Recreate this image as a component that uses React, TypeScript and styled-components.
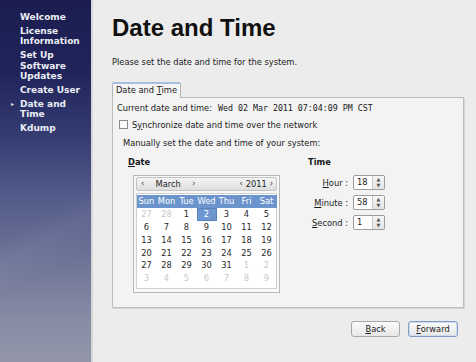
import styled, { createGlobalStyle } from "styled-components";

const GlobalStyle = createGlobalStyle`
  html, body {
    margin: 0;
    padding: 0;
  }
  body {
    width: 476px;
    height: 362px;
    overflow: hidden;
    background: #ececec;
    font-family: "DejaVu Sans", "Liberation Sans", sans-serif;
    color: #1a1a1a;
  }
`;

const Screen = styled.div`
  display: flex;
  width: 476px;
  height: 362px;
`;

const Sidebar = styled.div`
  width: 93px;
  flex-shrink: 0;
  border-right: 2px solid #d6d6d8;
  background:
    linear-gradient(150deg, transparent 58%, rgba(255, 255, 255, 0.04) 64%, transparent 72%),
    linear-gradient(180deg, #1b1d4f 0%, #20245a 20%, #353d72 38%, #535c8a 55%, #6e7497 72%, #878ba4 88%, #9396aa 100%);
  padding: 12px 0 0 20px;
  box-sizing: border-box;
  display: flex;
  flex-direction: column;
  gap: 3.5px;
`;

const NavItem = styled.div<{ current?: boolean }>`
  position: relative;
  font-size: 9px;
  font-weight: bold;
  line-height: 10.4px;
  color: #eceef6;
  white-space: pre-line;
  &::before {
    content: "▸";
    display: ${(p) => (p.current ? "block" : "none")};
    position: absolute;
    left: -9px;
    top: 0;
    font-size: 6px;
    color: #e0e2ec;
  }
`;

const Main = styled.div`
  flex: 1;
  display: flex;
  flex-direction: column;
  padding: 0 12px 0 19px;
`;

const Title = styled.h1`
  margin: 14px 0 0;
  font-family: "Liberation Sans", "DejaVu Sans", sans-serif;
  font-size: 24px;
  line-height: 28px;
  font-weight: bold;
  color: #111;
`;

const Intro = styled.p`
  margin: 15px 0 0;
  font-size: 8.3px;
  line-height: 10px;
  color: #222;
`;

const TabBar = styled.div`
  display: flex;
  margin-top: 15px;
`;

const Tab = styled.div`
  width: 69px;
  height: 16px;
  box-sizing: border-box;
  border: 1px solid #b4b4b4;
  border-top: 2px solid #a7bfdf;
  border-bottom: none;
  border-radius: 2px 2px 0 0;
  background: #f4f4f4;
  font-size: 8.3px;
  line-height: 13px;
  text-align: center;
  margin-bottom: -1px;
  position: relative;
  z-index: 1;
`;

const U = styled.span`
  text-decoration: underline;
`;

const Panel = styled.div`
  height: 211px;
  box-sizing: border-box;
  border: 1px solid #bdbdbd;
  background: #f3f3f3;
  box-shadow: 1px 1px 0 #d4d4d4;
  padding: 4px 0 0 4px;
  font-size: 8.3px;
  line-height: 10px;
`;

const InfoRow = styled.div`
  display: flex;
  align-items: center;
  height: 11px;
`;

const Mono = styled.span`
  font-family: "DejaVu Sans Mono", "Liberation Mono", monospace;
  font-size: 8.3px;
  margin-left: 6px;
`;

const CheckRow = styled.div`
  display: flex;
  align-items: center;
  height: 11px;
  margin-top: 6px;
  padding-left: 2px;
`;

const CheckBox = styled.span`
  width: 7px;
  height: 7px;
  border: 1px solid #8a8a8a;
  background: #fbfbfb;
  margin-right: 4px;
`;

const Manual = styled.div`
  margin: 8px 0 0 6px;
  height: 11px;
  line-height: 11px;
`;

const Columns = styled.div`
  display: flex;
  margin: 8px 0 0 11px;
`;

const DateCol = styled.div`
  width: 180px;
  display: flex;
  flex-direction: column;
`;

const TimeCol = styled.div`
  display: flex;
  flex-direction: column;
`;

const Heading = styled.div`
  font-weight: bold;
  height: 11px;
  line-height: 11px;
`;

const Calendar = styled.div`
  margin: 7px 0 0 5px;
  width: 147px;
  box-sizing: border-box;
  border: 1px solid #b8b8b8;
  background: #f8f8f8;
  padding: 1px 2px 3px 2px;
`;

const CalHeader = styled.div`
  height: 14px;
  box-sizing: border-box;
  border: 1px solid #c4c4c4;
  border-radius: 2px;
  background: linear-gradient(#f4f4f4, #dedede);
  display: flex;
  align-items: center;
  justify-content: space-between;
  padding: 0 3px 0 4px;
  font-size: 8.3px;
  color: #222;
`;

const Nav = styled.div`
  display: flex;
  align-items: center;
  gap: 3px;
`;

const Arrow = styled.span`
  font-size: 8px;
  color: #333;
`;

const Month = styled.span`
  width: 42px;
  text-align: center;
`;

const CalBody = styled.div`
  margin-top: 2px;
  background: #fff;
  border: 1px solid #d0d0d0;
  padding: 1px 0 3px 0;
`;

const Grid = styled.div`
  display: grid;
  grid-template-columns: repeat(7, 20px);
  grid-auto-rows: 12.8px;
  font-size: 8.3px;
  justify-content: center;
`;

const DayName = styled.div`
  background: #6b93cc;
  color: #fff;
  display: flex;
  align-items: center;
  justify-content: center;
`;

const Day = styled.div<{ faded?: boolean; selected?: boolean }>`
  display: flex;
  align-items: center;
  justify-content: center;
  color: ${(p) => (p.selected ? "#fff" : p.faded ? "#c9c9c9" : "#2a2a2a")};
  background: ${(p) => (p.selected ? "#6f97cf" : "transparent")};
  box-shadow: ${(p) => (p.selected ? "inset 0 0 0 1px #5a83bd" : "none")};
`;

const TimeGrid = styled.div`
  display: grid;
  grid-template-columns: 40px 32px;
  column-gap: 5px;
  row-gap: 5px;
  margin-top: 7px;
  align-items: center;
`;

const TimeLabel = styled.div`
  text-align: right;
  font-size: 8.3px;
`;

const Spin = styled.div`
  display: flex;
  height: 15px;
  box-sizing: border-box;
  border: 1px solid #9c9c9c;
  border-radius: 2px;
  background: #fff;
`;

const SpinValue = styled.div`
  flex: 1;
  padding-left: 3px;
  font-size: 8.3px;
  line-height: 13px;
`;

const SpinArrows = styled.div`
  width: 11px;
  border-left: 1px solid #c8c8c8;
  background: linear-gradient(#f6f6f6, #e4e4e4);
  display: flex;
  flex-direction: column;
  align-items: center;
  justify-content: space-around;
  font-size: 5px;
  line-height: 5px;
  color: #555;
`;

const Buttons = styled.div`
  display: flex;
  justify-content: flex-end;
  gap: 8px;
  margin: 13px 6px 0 0;
`;

const Button = styled.div<{ primary?: boolean }>`
  height: 16px;
  width: ${(p) => (p.primary ? "50px" : "49px")};
  box-sizing: border-box;
  border: 1px solid ${(p) => (p.primary ? "#7f9cc6" : "#a8a8a8")};
  border-radius: 3px;
  background: linear-gradient(#fbfbfb, #e6e6e6);
  box-shadow: ${(p) => (p.primary ? "inset 0 0 0 1px #cfdcef" : "none")};
  font-size: 8.3px;
  line-height: 14px;
  text-align: center;
  color: #222;
`;

const navItems = [
  { label: "Welcome" },
  { label: "License\nInformation" },
  { label: "Set Up\nSoftware\nUpdates" },
  { label: "Create User" },
  { label: "Date and\nTime", current: true },
  { label: "Kdump" },
];

const dayNames = ["Sun", "Mon", "Tue", "Wed", "Thu", "Fri", "Sat"];

const days: { n: number; faded?: boolean }[] = [
  { n: 27, faded: true },
  { n: 28, faded: true },
  ...Array.from({ length: 31 }, (_, i) => ({ n: i + 1 })),
  ...[1, 2, 3, 4, 5, 6, 7, 8, 9].map((n) => ({ n, faded: true })),
];

const timeFields = [
  { key: "H", rest: "our :", value: "18" },
  { key: "M", rest: "inute :", value: "58" },
  { key: "S", rest: "econd :", value: "1" },
];

const App = () => {
  return (
    <>
      <GlobalStyle />
      <Screen>
        <Sidebar>
          {navItems.map((item) => (
            <NavItem key={item.label} current={item.current}>
              {item.label}
            </NavItem>
          ))}
        </Sidebar>
        <Main>
          <Title>Date and Time</Title>
          <Intro>Please set the date and time for the system.</Intro>
          <TabBar>
            <Tab>
              Date and <U>T</U>ime
            </Tab>
          </TabBar>
          <Panel>
            <InfoRow>
              Current date and time:
              <Mono>Wed 02 Mar 2011 07:04:09 PM CST</Mono>
            </InfoRow>
            <CheckRow>
              <CheckBox />
              <span>
                S<U>y</U>nchronize date and time over the network
              </span>
            </CheckRow>
            <Manual>Manually set the date and time of your system:</Manual>
            <Columns>
              <DateCol>
                <Heading>
                  <U>D</U>ate
                </Heading>
                <Calendar>
                  <CalHeader>
                    <Nav>
                      <Arrow>‹</Arrow>
                      <Month>March</Month>
                      <Arrow>›</Arrow>
                    </Nav>
                    <Nav>
                      <Arrow>‹</Arrow>
                      <span>2011</span>
                      <Arrow>›</Arrow>
                    </Nav>
                  </CalHeader>
                  <CalBody>
                    <Grid>
                      {dayNames.map((d) => (
                        <DayName key={d}>{d}</DayName>
                      ))}
                      {days.map((d, i) => (
                        <Day
                          key={i}
                          faded={d.faded}
                          selected={!d.faded && d.n === 2}
                        >
                          {d.n}
                        </Day>
                      ))}
                    </Grid>
                  </CalBody>
                </Calendar>
              </DateCol>
              <TimeCol>
                <Heading>Time</Heading>
                <TimeGrid>
                  {timeFields.map((f) => [
                    <TimeLabel key={f.key + "l"}>
                      <U>{f.key}</U>
                      {f.rest}
                    </TimeLabel>,
                    <Spin key={f.key + "s"}>
                      <SpinValue>{f.value}</SpinValue>
                      <SpinArrows>
                        <span>▲</span>
                        <span>▼</span>
                      </SpinArrows>
                    </Spin>,
                  ])}
                </TimeGrid>
              </TimeCol>
            </Columns>
          </Panel>
          <Buttons>
            <Button>
              <U>B</U>ack
            </Button>
            <Button primary>
              <U>F</U>orward
            </Button>
          </Buttons>
        </Main>
      </Screen>
    </>
  );
};

export default App;
